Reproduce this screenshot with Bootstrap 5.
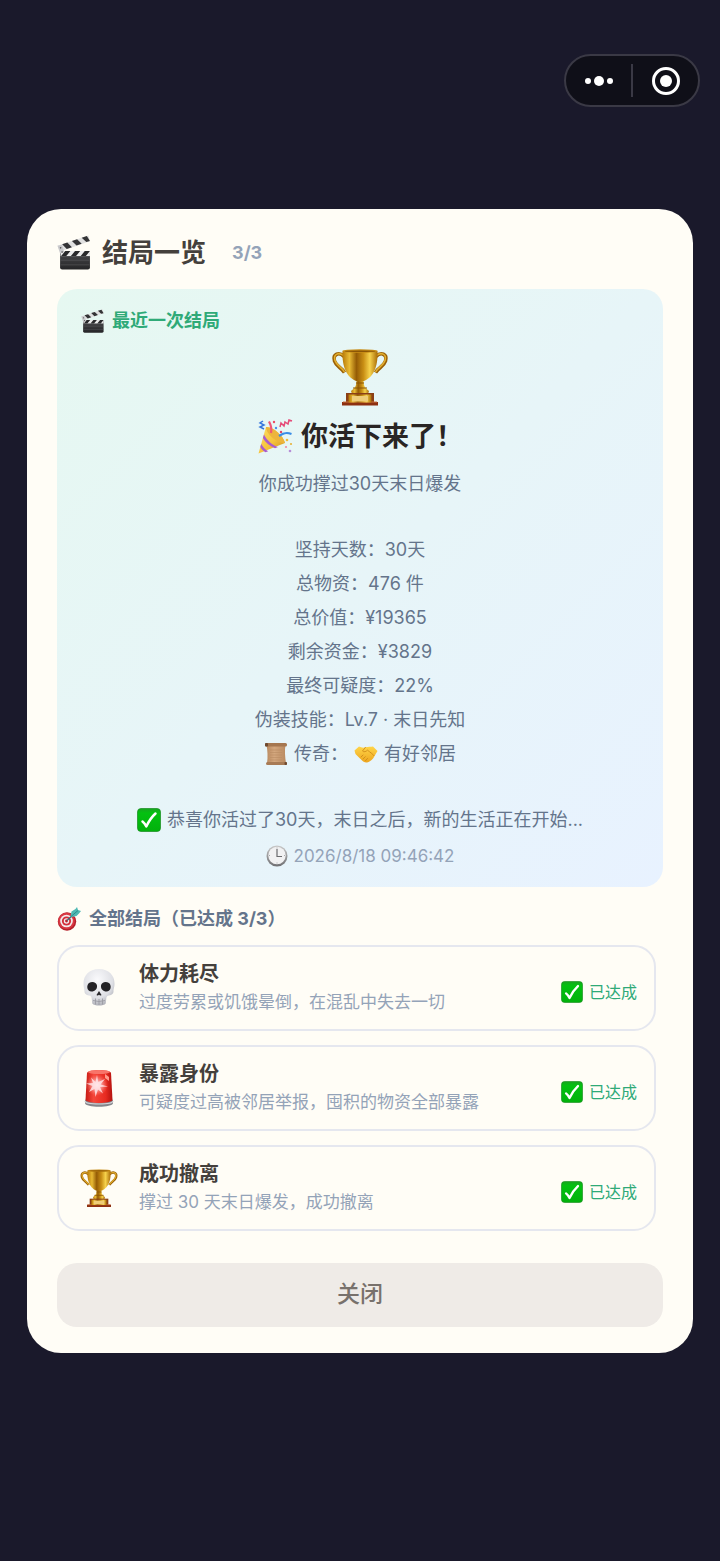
<!DOCTYPE html>
<html lang="zh-CN">
<head>
<meta charset="utf-8">
<meta name="viewport" content="width=device-width, initial-scale=1">
<title>结局一览</title>
<link href="https://cdn.jsdelivr.net/npm/bootstrap@5.3.0/dist/css/bootstrap.min.css" rel="stylesheet">
<style>
  body { background: #1a192b; color: #64748b; font-family: Inter, "Noto Sans CJK SC", sans-serif; font-size: 18px; }
  svg { flex: none; display: block; }
  .capsule { top: 54px; right: 20px; width: 136px; height: 53px; background: #0f0f18; border: 2px solid #3a3945; }
  .capsule button { background: none; border: 0; padding: 0; flex: 1; display: flex; justify-content: center; align-items: center; }
  .capsule .divider { width: 2px; height: 33px; background: #3a3945; }
  .screen { padding: 24px 27px; }
  .sheet { background: #fffdf6; border-radius: 34px; padding: 24px 30px 26px; }
  .sheet-title { font-size: 26px; line-height: 40px; font-weight: 700; color: #44403c; gap: 10px; }
  .sheet-count { color: #94a3b8; font-size: 18px; font-weight: 700; margin-left: 16px; }
  .latest { background: linear-gradient(135deg, #e6f8f1, #e8f2ff); border-radius: 20px; padding: 18px 24px 16px; margin-top: 16px; }
  .latest-label { color: #2faa78; font-weight: 700; line-height: 28px; gap: 7px; font-size: 18px; }
  .latest-cup { margin: 12px auto; }
  .latest-title { font-size: 27px; line-height: 36px; font-weight: 700; color: #292524; gap: 8px; margin-bottom: 12px; }
  .story { line-height: 34px; gap: 32px; }
  .story-line { gap: 6px; }
  .stamp { color: #94a3b8; font-size: 17px; line-height: 30px; margin-top: 4px; gap: 6px; }
  .all-title { font-size: 18px; line-height: 28px; font-weight: 700; margin: 18px 0 12px; gap: 8px; }
  .endings { gap: 14px; padding-right: 7px; }
  .ending { border: 2px solid #e5e7ef; border-radius: 22px; padding: 13px 17px 13px 20px; gap: 20px; }
  .ending-name { font-size: 20px; line-height: 28px; font-weight: 700; color: #44403c; }
  .ending-desc { font-size: 17px; line-height: 28px; color: #94a3b8; }
  .ending-state { font-size: 16px; line-height: 24px; color: #2faa78; gap: 6px; }
  .close-btn { background: #efebe7; color: #78716c; border: 0; border-radius: 20px; height: 64px; font-size: 23px; font-weight: 500; margin-top: 32px; }
</style>
</head>
<body>
<svg width="0" height="0" class="position-absolute" aria-hidden="true">
  <defs>
    <linearGradient id="gold" x1="0" x2="1" y1="0" y2="0">
      <stop offset="0" stop-color="#b87a08"/><stop offset=".2" stop-color="#e9bb35"/><stop offset=".4" stop-color="#955c05"/><stop offset=".6" stop-color="#c98f15"/><stop offset=".78" stop-color="#f6d24c"/><stop offset="1" stop-color="#a96c07"/>
    </linearGradient>
    <linearGradient id="green" x1="0" x2="0" y1="0" y2="1"><stop offset="0" stop-color="#17a51f"/><stop offset=".2" stop-color="#04c111"/><stop offset="1" stop-color="#02b10c"/></linearGradient>
    <linearGradient id="slate" x1="0" x2="0" y1="0" y2="1"><stop offset="0" stop-color="#4b4b4e"/><stop offset="1" stop-color="#252527"/></linearGradient>
    <radialGradient id="bone" cx=".45" cy=".3" r=".75"><stop offset="0" stop-color="#fafafc"/><stop offset=".65" stop-color="#dfe0e5"/><stop offset="1" stop-color="#a5a6ae"/></radialGradient>
    <linearGradient id="red" x1="0" x2="1" y1="0" y2="0"><stop offset="0" stop-color="#c71b14"/><stop offset=".3" stop-color="#f5463a"/><stop offset=".75" stop-color="#e72a20"/><stop offset="1" stop-color="#b3120e"/></linearGradient>
    <radialGradient id="flare"><stop offset="0" stop-color="#fff"/><stop offset=".3" stop-color="#ffd9dc" stop-opacity=".8"/><stop offset="1" stop-color="#ff7a70" stop-opacity="0"/></radialGradient>
    <linearGradient id="cone" x1="0" x2="1" y1="0" y2="1"><stop offset="0" stop-color="#fbe066"/><stop offset=".55" stop-color="#f6c33c"/><stop offset="1" stop-color="#c98b1d"/></linearGradient>
    <linearGradient id="paper" x1="0" x2="1" y1="0" y2="0"><stop offset="0" stop-color="#b98a60"/><stop offset=".4" stop-color="#d3a77e"/><stop offset="1" stop-color="#b98a60"/></linearGradient>
    <linearGradient id="rim" x1="0" x2="0" y1="0" y2="1"><stop offset="0" stop-color="#c9c9c9"/><stop offset="1" stop-color="#6f6f72"/></linearGradient>
    <linearGradient id="hand" x1="0" x2="0" y1="0" y2="1"><stop offset="0" stop-color="#ffd548"/><stop offset="1" stop-color="#eda51e"/></linearGradient>
  </defs>
  <symbol id="clapper" viewBox="0 0 34 34">
    <rect x="3" y="16" width="29" height="17.500" rx="2" fill="url(#slate)"/>
    <path d="M3.500 15.500h28.500v5H3.500z" fill="#ececec"/>
    <path d="M4 20.500l4-5h5l-4 5zM13.500 20.500l4-5h5l-4 5zM23 20.500l4-5h5l-4 5z" fill="#29292b"/>
    <path d="M3.500 24.500h28M3.500 29h28" stroke="#59595c" stroke-width=".6"/>
    <path d="M.5 10.500L30.500.5l1.500 5.500L3 16z" fill="#e0e0e0"/>
    <path d="M5 9l5-1.700 4.500 4.500-5 1.700zM14.500 5.800l5-1.600 4.500 4.300-5 1.700zM24 2.600l5-1.600 3 4.900-3.500 1z" fill="#343436"/>
    <path d="M.5 10.500L3 18l4-1.500-2-7z" fill="#c9c9cc"/>
    <circle cx="3.500" cy="12.500" r=".8" fill="#555"/><circle cx="5" cy="16.500" r=".8" fill="#555"/>
  </symbol>
  <symbol id="trophy" viewBox="0 0 60 60">
    <path d="M14 9.500C9 4.500 2.500 7 4.500 14c1.700 5.500 7 6.500 10 11.500M46 9.500c5-5 11.500-2.500 9.500 4.500-1.700 5.500-7 6.500-10 11.500" fill="none" stroke="#9a6006" stroke-width="3.600"/>
    <path d="M14 9C9 4.500 3 7 5 13.500c1.700 5.500 7 6.500 9.500 11.500M46 9c5-4.500 11-2 9 4.500-1.700 5.500-7 6.500-9.500 11.500" fill="none" stroke="#e3b030" stroke-width="1.600"/>
    <path d="M27 30h6l1 8c1 3 3 4 5 6l-1 3H22l-1-3c2-2 4-3 5-6z" fill="url(#gold)"/>
    <path d="M12.500 4h35c.5 12-2 25-13.500 30h-8C14.500 29 12 16 12.500 4z" fill="url(#gold)"/>
    <ellipse cx="30" cy="4" rx="17.500" ry="1.700" fill="#c78c16"/>
    <ellipse cx="30" cy="4.300" rx="15.500" ry=".8" fill="#8b5606"/>
    <path d="M23 41h14M26 36h8" stroke="#8c5405" stroke-width="1.200"/>
    <path d="M16 46h28v10H16z" fill="#8a3f16"/><path d="M12 55h36v3.500H12z" fill="#8d3011"/><path d="M13 55h34" stroke="#cb7343"/>
    <path d="M18.500 47.500h23v8h-23z" fill="url(#gold)"/><path d="M22 49h16v5.500H22z" fill="#efcd78"/>
  </symbol>
  <symbol id="check" viewBox="0 0 24 24">
    <rect x=".5" y=".5" width="23" height="23" rx="3.500" fill="url(#green)" stroke="#168b1c" stroke-width=".7"/>
    <path d="M5.500 13.500q2 1.500 3.800 5Q13 10.500 18.500 5.500" fill="none" stroke="#fff" stroke-width="2.500" stroke-linecap="round" stroke-linejoin="round"/>
  </symbol>
  <symbol id="party" viewBox="0 0 36 36">
    <path d="M1.500 34.500L9 8c6-1 17 8 19 16z" fill="url(#cone)"/>
    <path d="M9 8c6-1 17 8 19 16C22 25 9 16 9 8z" fill="#edb53d"/>
    <path d="M7 15.500c3 6 8 10.500 14 12.500l-3 1.300C12.500 27 8.500 23.500 5.900 19zM4.200 25c2 3.500 4 5.500 7 7.300L8.500 33.200C6.300 32 4.700 30.500 3.300 28z" fill="#a95ccc"/>
    <path d="M14 14c1-5 0-8-2-11.500" fill="none" stroke="#ef5777" stroke-width="2.200"/>
    <path d="M22 17c4-3 7-4 12.500-2" fill="none" stroke="#3b8ee6" stroke-width="2.200"/>
    <path d="M23 8l1-4 3 3 1-4 3 2 1-4 3 1" fill="none" stroke="#e54a78" stroke-width="1.500"/>
    <path d="M6 2l-3 2 4 2-4 2 4 2" fill="none" stroke="#3978dc" stroke-width="1.500"/>
    <circle cx="17" cy="3" r="1.200" fill="#ed4a63"/><circle cx="19" cy="9" r="1.200" fill="#4d8ee8"/><circle cx="30" cy="21" r="1.300" fill="#f0bd3b"/><circle cx="34" cy="25" r="1.100" fill="#e7b33c"/><circle cx="29" cy="28" r="1.100" fill="#ef8aa7"/><circle cx="33" cy="32" r="1.300" fill="#b68ed8"/><circle cx="24" cy="13" r="1.200" fill="#e14665"/>
  </symbol>
  <symbol id="scroll" viewBox="0 0 24 24">
    <path d="M2.500 3h19c-1 5-.5 12 .5 18.500H3C4 15 3.500 8 2.500 3z" fill="url(#paper)"/>
    <path d="M6 8h12M6 10.500h12M6 13h12M6 15.500h12M6 18h12" stroke="#b88b63" stroke-width=".6"/>
    <rect x="1" y="1" width="22" height="3.500" rx="1.500" fill="#a57750"/><rect x="1" y="1" width="3" height="3.500" rx="1" fill="#6e4a30"/>
    <rect x="2" y="20" width="21" height="3" rx="1.500" fill="#a87b55"/><rect x="20.500" y="20" width="2.500" height="3" rx="1" fill="#6e4a30"/>
  </symbol>
  <symbol id="shake" viewBox="0 0 24 24">
    <path d="M.5 8.500L5 4.500c2 1 4 1.500 6.500.8 3-.8 5-.3 7.500-.8l4.500 4.500-3 5c-1 3-5 6-7.500 6.500-2 .3-5-1.500-7-4L1.500 12z" fill="url(#hand)"/>
    <path d="M11.500 5.300L8.500 9c1.500 1.500 3.500.5 5-.8 2.500 2 5 3.500 6.500 5.500M7 15l2-2M9 17l2.300-2.300M11.500 18.700l2-2.200" fill="none" stroke="#cc8517" stroke-width=".8" stroke-linecap="round"/>
  </symbol>
  <symbol id="clock" viewBox="0 0 22 22">
    <circle cx="11" cy="11" r="10.500" fill="url(#rim)"/><circle cx="11" cy="10.500" r="8.700" fill="#f1f1f2"/>
    <path d="M11 4v7.500h5" fill="none" stroke="#6a6a6d" stroke-width="1.200"/>
    <path d="M11 2.500v1M11 17.500v1M3 10.500h1M18 10.500h1" stroke="#999" stroke-width=".8"/>
  </symbol>
  <symbol id="target" viewBox="0 0 24 24">
    <circle cx="10" cy="14.500" r="9.200" fill="#b5202b"/><circle cx="9.500" cy="14" r="8.300" fill="#d93843"/>
    <circle cx="9.500" cy="14" r="6.300" fill="#f3eced"/><circle cx="9.500" cy="14" r="4.600" fill="#d22f3b"/><circle cx="9.500" cy="14" r="2.700" fill="#f3eced"/><circle cx="9.500" cy="14" r="1.400" fill="#c3202d"/>
    <path d="M10 13.500l8-7.500" stroke="#356f78" stroke-width="1.300"/>
    <path d="M13.500 9.500l1-5L18.500 2l1.500-2 1 3 3 1-2 2.500-2.500 2.500-5 1z" fill="#4fb9b4"/><path d="M14 9.500l7-6" stroke="#287d82" stroke-width=".8"/>
  </symbol>
  <symbol id="skull" viewBox="0 0 40 40">
    <path d="M20 1C10 1 4.500 7.500 4.500 15.500c0 4 1 5 1 8 0 2 1.500 3.500 4.500 4 2 .4 2.500 1 2.700 3l.6 5c2 2.700 11.400 2.700 13.400 0l.6-5c.2-2 .7-2.600 2.700-3 3-.5 4.500-2 4.500-4 0-3 1-4 1-8C35.500 7.500 30 1 20 1z" fill="url(#bone)"/>
    <path d="M10 15c3-2 7.500-1 8 2.500.4 3.500-2 6-5.500 6-4.500 0-5.500-6-2.500-8.500zM30 15c-3-2-7.500-1-8 2.500-.4 3.500 2 6 5.500 6 4.500 0 5.500-6 2.500-8.500z" fill="#242326"/>
    <path d="M20 23l2.500 4c-1 1-2 .3-2.500-.3-.5.600-1.500 1.300-2.500.3z" fill="#29282b"/>
    <path d="M14 32.500q6 2 12 0M16.500 30.500v6M20 31v6M23.500 30.500v6" fill="none" stroke="#9b9ba3" stroke-width=".9"/>
  </symbol>
  <symbol id="siren" viewBox="0 0 40 40">
    <path d="M6 33c0-2 3-3 14-3s14 1 14 3v2c0 5-28 5-28 0z" fill="#85868b"/>
    <path d="M6 33c0 4 28 4 28 0" fill="none" stroke="#d4d5d9" stroke-width="1.200"/>
    <path d="M8 5c1-4 23-4 24 0l1.500 27c-2 4-25 4-27 0z" fill="url(#red)"/>
    <ellipse cx="20" cy="4" rx="11" ry="2" fill="#f87469"/>
    <circle cx="18" cy="17" r="11" fill="url(#flare)"/>
    <path d="M18 7l1.200 7L26 11l-4.500 5.500L29 18.500l-8 .5 3 6.500-5-4L16.500 29l-1-8L10 24l3.500-6L7 15.500l7-.5-2-5.500 4.500 4.500z" fill="#ffe3e6" opacity=".85"/>
    <path d="M26 6l4 3v4l-4-3z" fill="#ff9b8c"/>
  </symbol>
</svg>

<div class="capsule position-absolute rounded-pill d-flex align-items-center">
  <button type="button" aria-label="更多"><svg width="30" height="12" viewBox="0 0 30 12" fill="#fff"><circle cx="4" cy="6" r="3"/><circle cx="15" cy="6" r="5"/><circle cx="26" cy="6" r="3"/></svg></button>
  <span class="divider"></span>
  <button type="button" aria-label="退出"><svg width="30" height="30" viewBox="0 0 30 30"><circle cx="15" cy="15" r="12.500" fill="none" stroke="#fff" stroke-width="3"/><circle cx="15" cy="15" r="6" fill="#fff"/></svg></button>
</div>

<div class="screen min-vh-100 d-flex flex-column justify-content-center">
  <main class="sheet">
    <h1 class="sheet-title d-flex align-items-center mb-0">
      <svg width="35" height="35"><use href="#clapper"/></svg>结局一览
      <span class="sheet-count">3/3</span>
    </h1>

    <section class="latest d-flex flex-column">
      <h2 class="latest-label d-flex align-items-center mb-0"><svg width="24" height="24"><use href="#clapper"/></svg>最近一次结局</h2>
      <svg class="latest-cup" width="60" height="60"><use href="#trophy"/></svg>
      <h3 class="latest-title d-flex align-items-center justify-content-center"><svg width="36" height="36"><use href="#party"/></svg>你活下来了！</h3>
      <div class="story d-flex flex-column text-center">
        <div>你成功撑过30天末日爆发</div>
        <div>
          <div>坚持天数：30天</div>
          <div>总物资：476 件</div>
          <div>总价值：¥19365</div>
          <div>剩余资金：¥3829</div>
          <div>最终可疑度：22%</div>
          <div>伪装技能：Lv.7 · 末日先知</div>
          <div class="story-line d-flex align-items-center justify-content-center"><svg width="24" height="24"><use href="#scroll"/></svg>传奇：<svg width="24" height="24"><use href="#shake"/></svg>有好邻居</div>
        </div>
        <div class="story-line d-flex align-items-center justify-content-center"><svg width="24" height="24"><use href="#check"/></svg>恭喜你活过了30天，末日之后，新的生活正在开始...</div>
      </div>
      <div class="stamp d-flex align-items-center justify-content-center"><svg width="22" height="22"><use href="#clock"/></svg>2026/8/18 09:46:42</div>
    </section>

    <h2 class="all-title d-flex align-items-center"><svg width="24" height="24"><use href="#target"/></svg>全部结局（已达成 3/3）</h2>

    <ul class="endings list-unstyled d-flex flex-column mb-0">
      <li class="ending d-flex align-items-center">
        <svg width="40" height="40"><use href="#skull"/></svg>
        <div class="flex-grow-1"><div class="ending-name">体力耗尽</div><div class="ending-desc">过度劳累或饥饿晕倒，在混乱中失去一切</div></div>
        <div class="ending-state d-flex align-items-center pt-2"><svg width="22" height="22"><use href="#check"/></svg>已达成</div>
      </li>
      <li class="ending d-flex align-items-center">
        <svg width="40" height="40"><use href="#siren"/></svg>
        <div class="flex-grow-1"><div class="ending-name">暴露身份</div><div class="ending-desc">可疑度过高被邻居举报，囤积的物资全部暴露</div></div>
        <div class="ending-state d-flex align-items-center pt-2"><svg width="22" height="22"><use href="#check"/></svg>已达成</div>
      </li>
      <li class="ending d-flex align-items-center">
        <svg width="40" height="40"><use href="#trophy"/></svg>
        <div class="flex-grow-1"><div class="ending-name">成功撤离</div><div class="ending-desc">撑过 30 天末日爆发，成功撤离</div></div>
        <div class="ending-state d-flex align-items-center pt-2"><svg width="22" height="22"><use href="#check"/></svg>已达成</div>
      </li>
    </ul>

    <button type="button" class="close-btn btn w-100">关闭</button>
  </main>
</div>
<script src="https://cdn.jsdelivr.net/npm/bootstrap@5.3.0/dist/js/bootstrap.bundle.min.js"></script>
</body>
</html>
